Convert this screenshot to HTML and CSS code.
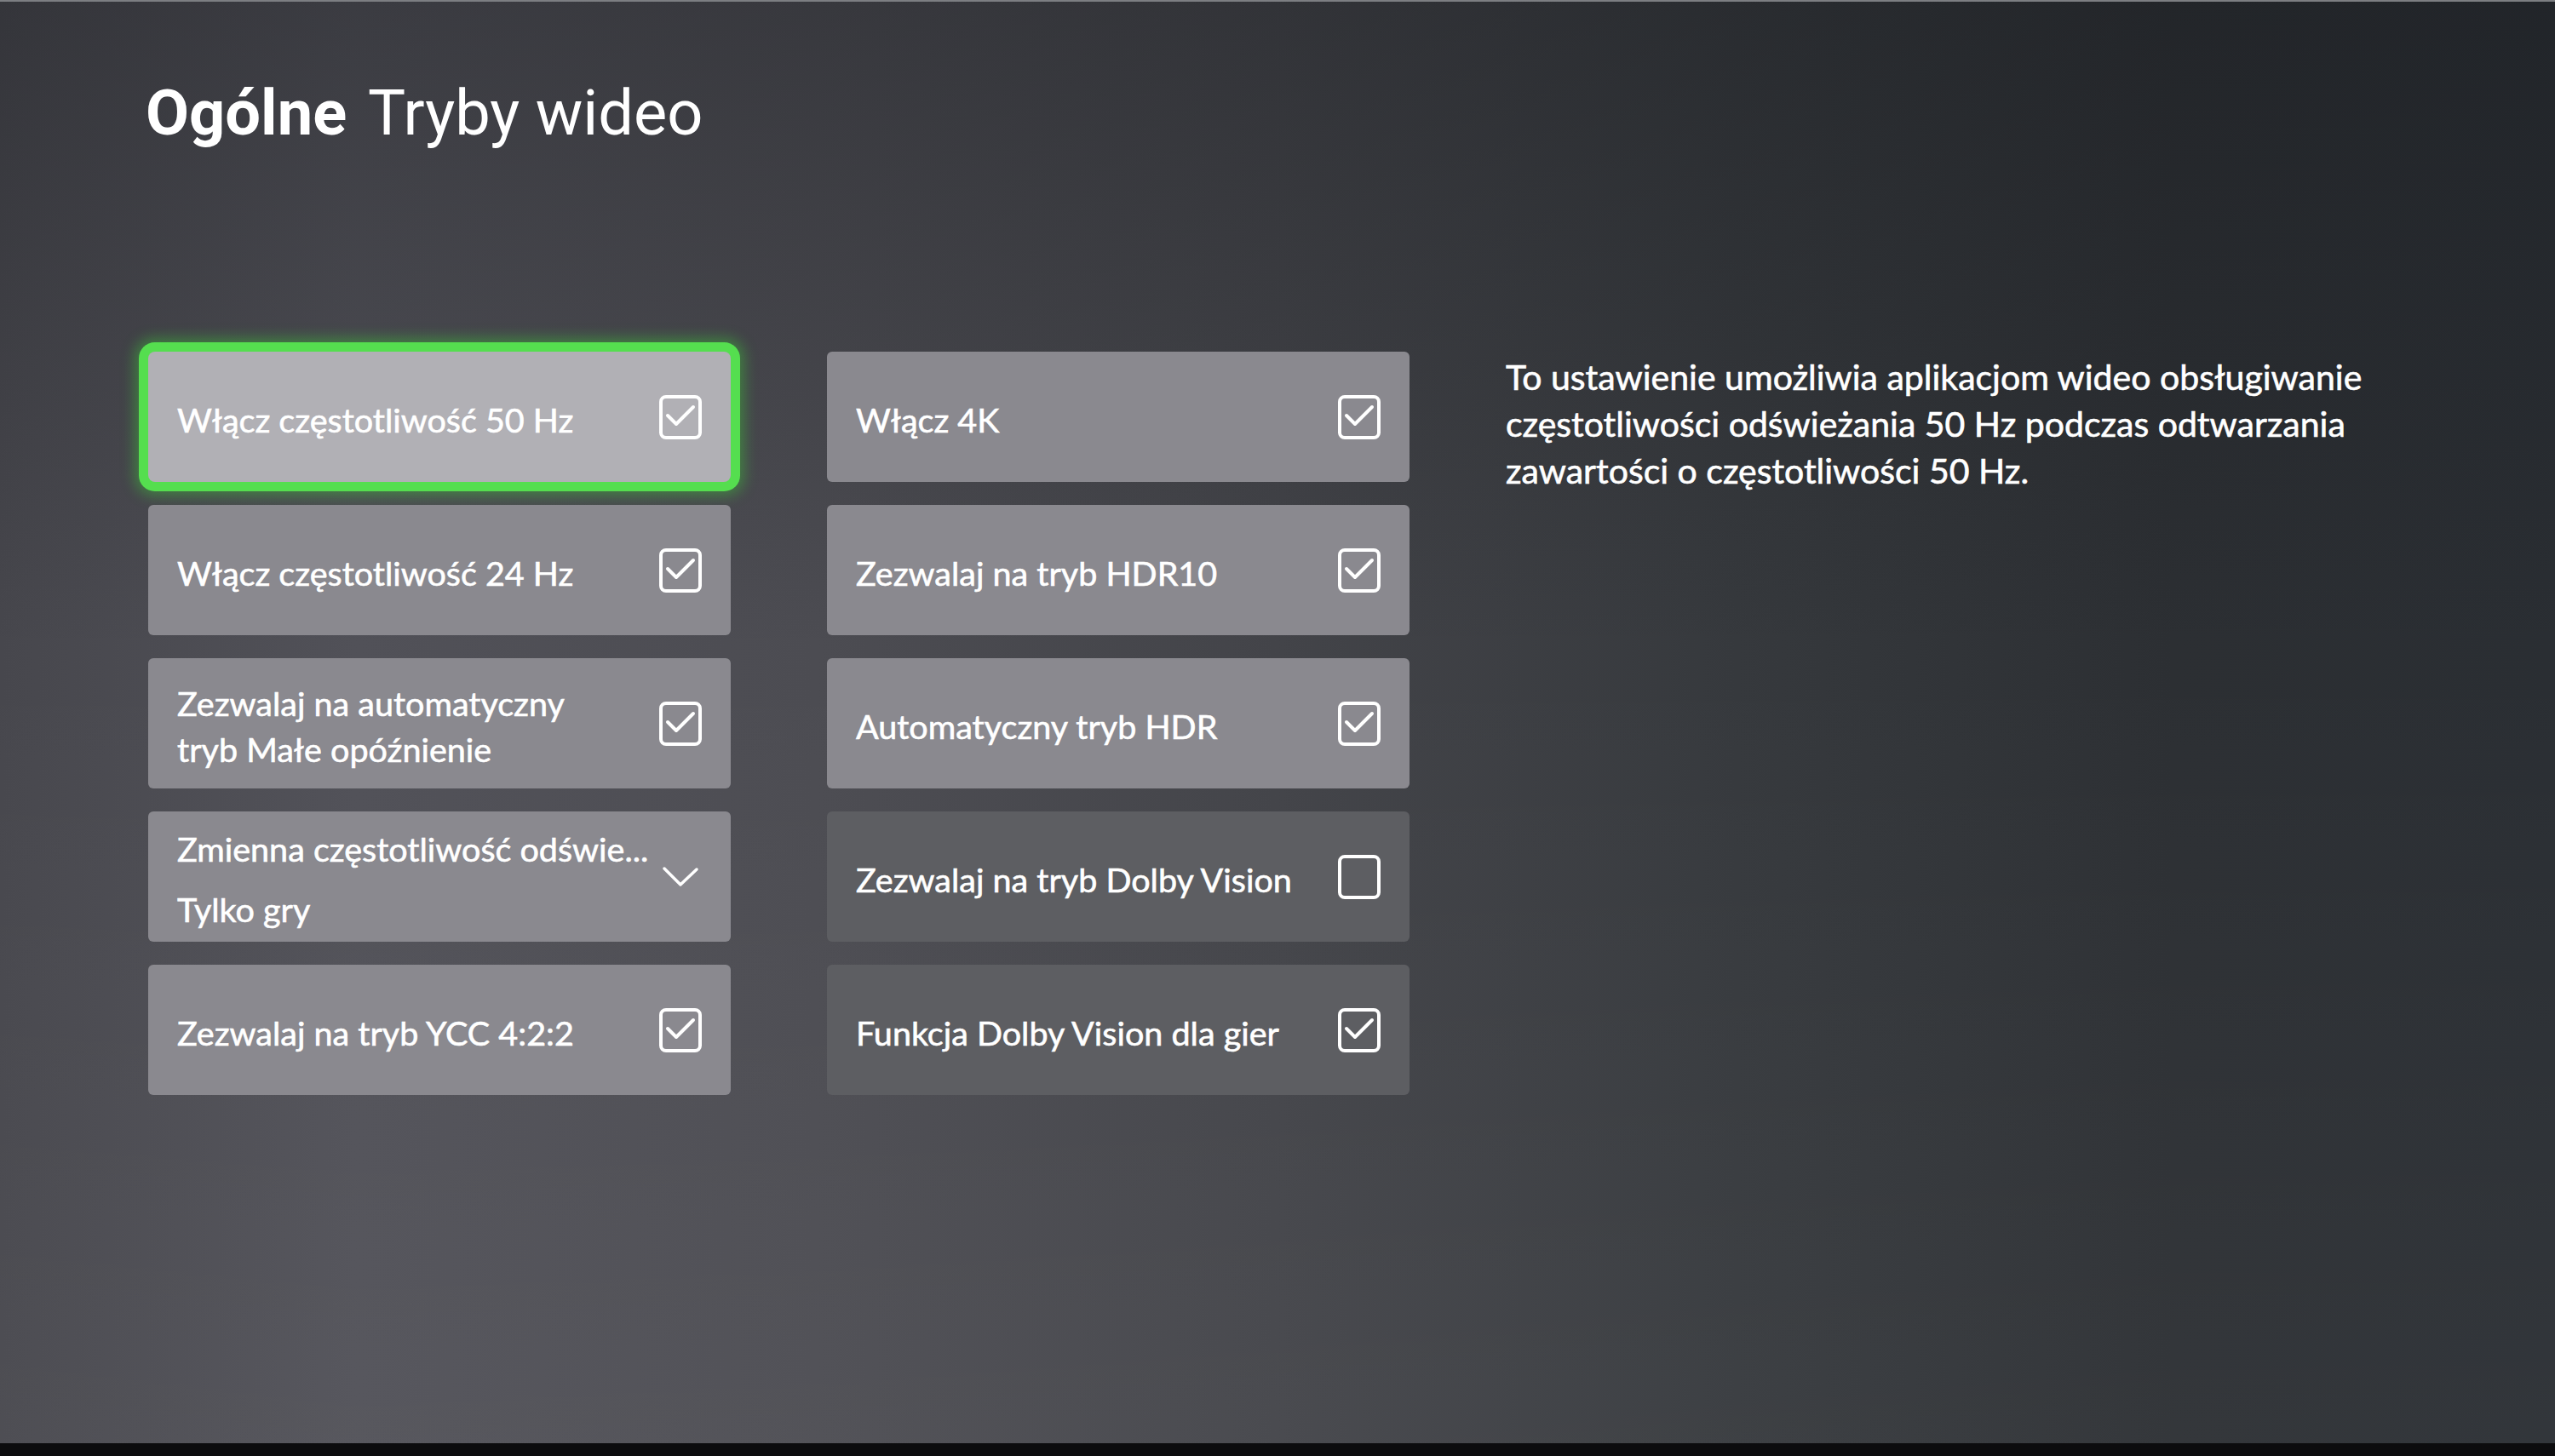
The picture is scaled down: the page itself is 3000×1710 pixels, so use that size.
FILE: index.html
```html
<!DOCTYPE html>
<html lang="pl">
<head>
    <meta charset="UTF-8">
    <meta name="viewport" content="width=device-width, initial-scale=1.0">
    <title>Tryby wideo</title>
    <link rel="stylesheet" href="styles.css">
</head>
<body>
    <svg class="sprite" xmlns="http://www.w3.org/2000/svg">
        <symbol id="box" viewBox="0 0 50 52">
            <rect x="2" y="2" width="46" height="48" rx="6" fill="none" stroke="currentColor" stroke-width="4"/>
        </symbol>
        <symbol id="check" viewBox="0 0 50 52">
            <rect x="2" y="2" width="46" height="48" rx="6" fill="none" stroke="currentColor" stroke-width="4"/>
            <path d="M10 24 L20 34 L40 14" fill="none" stroke="currentColor" stroke-width="4" stroke-linecap="round" stroke-linejoin="round"/>
        </symbol>
    </svg>

    <main class="screen">
        <h1 class="title"><span class="title-section">Ogólne</span> Tryby wideo</h1>

        <div class="content">
            <div class="options">
                <!-- left column -->
                <div class="tile focused">
                    <span class="tile-label">Włącz częstotliwość 50 Hz</span>
                    <svg class="checkbox"><use href="#check"/></svg>
                </div>
                <div class="tile">
                    <span class="tile-label">Włącz częstotliwość 24 Hz</span>
                    <svg class="checkbox"><use href="#check"/></svg>
                </div>
                <div class="tile">
                    <span class="tile-label">Zezwalaj na automatyczny<br>tryb Małe opóźnienie</span>
                    <svg class="checkbox"><use href="#check"/></svg>
                </div>
                <div class="tile">
                    <div class="select-text">
                        <span class="tile-label">Zmienna częstotliwość odświe...</span>
                        <span class="tile-label">Tylko gry</span>
                    </div>
                    <svg class="chevron" viewBox="0 0 50 26">
                        <path d="M6 3 L25 22 L44 4" fill="none" stroke="currentColor" stroke-width="3.5" stroke-linecap="round" stroke-linejoin="round"/>
                    </svg>
                </div>
                <div class="tile">
                    <span class="tile-label">Zezwalaj na tryb YCC 4:2:2</span>
                    <svg class="checkbox"><use href="#check"/></svg>
                </div>

                <!-- right column -->
                <div class="tile">
                    <span class="tile-label">Włącz 4K</span>
                    <svg class="checkbox"><use href="#check"/></svg>
                </div>
                <div class="tile">
                    <span class="tile-label">Zezwalaj na tryb HDR10</span>
                    <svg class="checkbox"><use href="#check"/></svg>
                </div>
                <div class="tile">
                    <span class="tile-label">Automatyczny tryb HDR</span>
                    <svg class="checkbox"><use href="#check"/></svg>
                </div>
                <div class="tile dim">
                    <span class="tile-label">Zezwalaj na tryb Dolby Vision</span>
                    <svg class="checkbox"><use href="#box"/></svg>
                </div>
                <div class="tile dim">
                    <span class="tile-label">Funkcja Dolby Vision dla gier</span>
                    <svg class="checkbox"><use href="#check"/></svg>
                </div>
            </div>

            <p class="description">To ustawienie umożliwia aplikacjom wideo obsługiwanie częstotliwości odświeżania 50 Hz podczas odtwarzania zawartości o częstotliwości 50 Hz.</p>
        </div>
    </main>
    <div class="bezel"></div>
</body>
</html>
```

FILE: styles.css
```css
body {
    margin: 0;
    padding: 0;
    background-color: #111;
    font-family: Lato, "Open Sans", sans-serif;
    color: #fff;
}
.sprite {
    display: none;
}
.screen {
    height: 1695px;
    box-sizing: border-box;
    border-top: 2px solid #7c7e82;
    padding: 87px 0 0 171px;
    background:
        linear-gradient(to bottom, rgba(18, 20, 24, 0.35) 0%, rgba(18, 20, 24, 0) 45%, rgba(255, 255, 255, 0.04) 100%),
        linear-gradient(to right, #47474d 0%, #515158 14%, #4c4c52 32%, #434449 50%, #36393d 68%, #2c2f33 85%, #2a2e33 100%);
}
.title {
    margin: 0;
    font-family: Roboto, "DejaVu Sans", sans-serif;
    font-size: 74px;
    line-height: 88px;
    font-weight: 400;
    color: #fff;
}
.title-section {
    font-weight: 700;
    margin-right: 8px;
}
.content {
    display: flex;
    align-items: flex-start;
    margin-top: 236px;
}
.options {
    display: grid;
    grid-template-columns: 684px 684px;
    grid-template-rows: repeat(5, 153px);
    grid-auto-flow: column;
    column-gap: 113px;
    row-gap: 27px;
    margin-left: 3px;
}
.tile {
    display: flex;
    align-items: center;
    justify-content: space-between;
    padding: 6px 34px 0;
    background-color: #8a898f;
    border-radius: 6px;
}
.tile.focused {
    background-color: #b1b0b5;
    border-radius: 8px;
    box-shadow: 0 0 0 11px #55de4f, 0 0 16px 16px rgba(60, 200, 55, 0.45);
}
.tile.dim {
    background-color: #5d5e62;
}
.tile-label {
    font-size: 39.5px;
    line-height: 54px;
    color: #fff;
    -webkit-text-stroke: 0.6px #fff;
}
.select-text {
    display: flex;
    flex-direction: column;
    gap: 17px;
}
.checkbox {
    width: 50px;
    height: 52px;
    flex-shrink: 0;
    margin-top: -6px;
    color: #fff;
}
.chevron {
    width: 50px;
    height: 26px;
    flex-shrink: 0;
    margin-top: -6px;
    color: #fff;
}
.description {
    margin: 2px 0 0 113px;
    width: 1040px;
    font-size: 41px;
    line-height: 55px;
    -webkit-text-stroke: 0.6px #fff;
}
.bezel {
    height: 15px;
    background-color: #0c0c0e;
    border-bottom: 5px solid #6c6d70;
}
```
